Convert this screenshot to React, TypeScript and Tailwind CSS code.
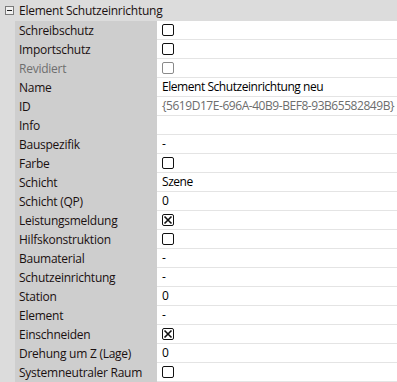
type Row = {
  label: string;
  kind: "check" | "text";
  value?: string;
  checked?: boolean;
  disabled?: boolean;
  muted?: boolean;
};

const rows: Row[] = [
  { label: "Schreibschutz", kind: "check" },
  { label: "Importschutz", kind: "check" },
  { label: "Revidiert", kind: "check", disabled: true },
  { label: "Name", kind: "text", value: "Element Schutzeinrichtung neu" },
  { label: "ID", kind: "text", value: "{5619D17E-696A-40B9-BEF8-93B65582849B}", muted: true },
  { label: "Info", kind: "text", value: "" },
  { label: "Bauspezifik", kind: "text", value: "-" },
  { label: "Farbe", kind: "check" },
  { label: "Schicht", kind: "text", value: "Szene" },
  { label: "Schicht (QP)", kind: "text", value: "0" },
  { label: "Leistungsmeldung", kind: "check", checked: true },
  { label: "Hilfskonstruktion", kind: "check" },
  { label: "Baumaterial", kind: "text", value: "-" },
  { label: "Schutzeinrichtung", kind: "text", value: "-" },
  { label: "Station", kind: "text", value: "0" },
  { label: "Element", kind: "text", value: "-" },
  { label: "Einschneiden", kind: "check", checked: true },
  { label: "Drehung um Z (Lage)", kind: "text", value: "0" },
  { label: "Systemneutraler Raum", kind: "check" },
];

function CheckBox({ checked, disabled }: { checked?: boolean; disabled?: boolean }) {
  return (
    <span
      className={`flex h-[12px] w-[12px] items-center justify-center rounded-[2px] border bg-white ${
        disabled ? "border-[#8a8a8a]" : "border-[#111]"
      }`}
    >
      {checked && (
        <svg width="10" height="10" viewBox="0 0 10 10">
          <path d="M1.5 1.5 L8.5 8.5 M8.5 1.5 L1.5 8.5" stroke="#111" strokeWidth="1.6" />
        </svg>
      )}
    </span>
  );
}

export default function App() {
  return (
    <div
      className="w-[397px] h-[382px] overflow-hidden bg-[#dcdcdc] text-[12px] text-[#1a1010] whitespace-nowrap"
      style={{ fontFamily: '"Open Sans", "Noto Sans", sans-serif' }}
    >
      <div className="flex h-[21px] items-center bg-[#dcdcdc]">
        <span className="ml-[5px] mr-[5px] flex h-[9px] w-[9px] items-center justify-center border border-[#7a7a7a] bg-[#f0f0f0]">
          <span className="h-px w-[5px] bg-[#222]" />
        </span>
        <span className="tracking-[-0.25px]">Element Schutzeinrichtung</span>
      </div>
      {rows.map((r) => (
        <div key={r.label} className="flex h-[19px] pl-[15px]">
          <div
            className={`flex w-[142px] items-center bg-[#cecece] pl-[4px] tracking-[-0.25px] ${
              r.disabled ? "text-[#6e6e6e]" : ""
            }`}
          >
            {r.label}
          </div>
          <div className="flex flex-1 items-center overflow-hidden border-b border-[#e4e4e4] bg-white pl-[5px] tracking-[-0.45px]">
            {r.kind === "check" ? (
              <CheckBox checked={r.checked} disabled={r.disabled} />
            ) : (
              <span className={r.muted ? "text-[#6d6d6d]" : "text-[#000]"}>{r.value}</span>
            )}
          </div>
        </div>
      ))}
    </div>
  );
}
